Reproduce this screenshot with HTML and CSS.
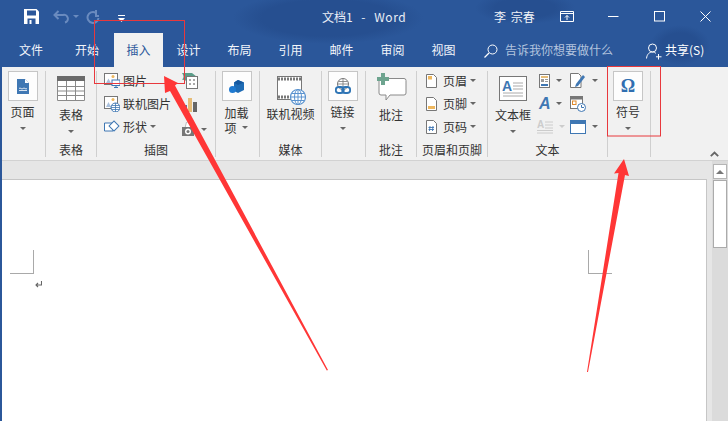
FILE: index.html
```html
<!DOCTYPE html>
<html lang="zh">
<head>
<meta charset="utf-8">
<title>文档1 - Word</title>
<link rel="stylesheet" href="styles.css">
</head>
<body>
<div class="app">
  <header class="head">
    <div class="titlebar">
      <div class="qat">
        <svg class="qat-save" width="15" height="15" viewBox="0 0 15 15"><path d="M0 0H12.500L15 2.500V15H0Z" fill="#fff"/><rect x="3" y="1.500" width="9" height="5" fill="#2b579a"/><rect x="3.500" y="9.500" width="8" height="5.500" fill="#2b579a"/><rect x="5.500" y="11" width="2" height="4" fill="#fff"/></svg>
        <svg class="qat-undo" width="16" height="14" viewBox="0 0 16 14"><path d="M5.500 1 1.500 5 5.500 9M2 5H10a3.800 3.800 0 0 1 2 7.500" fill="none" stroke="#6a8bbf" stroke-width="2"/></svg>
        <span class="qat-caret"></span>
        <svg class="qat-redo" width="14" height="14" viewBox="0 0 14 14"><path d="M10 0V6H13M9.500 2.500A5.500 5.500 0 1 0 12.500 8" fill="none" stroke="#6a8bbf" stroke-width="2"/></svg>
        <svg class="qat-more" width="7" height="7" viewBox="0 0 7 7"><rect x="0" y="0" width="7" height="1" fill="#fff"/><path d="M0 3H7L3.500 7Z" fill="#fff"/></svg>
      </div>
      <div class="doc-title">文档1 - <span class="latin">Word</span></div>
      <div class="user">李 宗春</div>
      <svg class="win-display" width="14" height="11" viewBox="0 0 14 11"><path d="M.5.500H13.500V10.500H.5ZM.5 2.500H13.500M7 9V4.500M5 6.500 7 4.500 9 6.500" fill="none" stroke="#fff"/></svg>
      <svg class="win-min" width="11" height="11" viewBox="0 0 11 11"><path d="M0 5.500H10.500" stroke="#fff" fill="none"/></svg>
      <svg class="win-max" width="11" height="11" viewBox="0 0 11 11"><rect x=".5" y=".5" width="10" height="9.500" fill="none" stroke="#fff"/></svg>
      <svg class="win-close" width="11" height="11" viewBox="0 0 11 11"><path d="M.5.500 10.500 10.500M10.500.500 .5 10.500" stroke="#fff" fill="none"/></svg>
    </div>
    <nav class="tabs">
      <span class="tab tab-file">文件</span>
      <span class="tab tab-home">开始</span>
      <span class="tab tab-active">插入</span>
      <span class="tab">设计</span>
      <span class="tab">布局</span>
      <span class="tab">引用</span>
      <span class="tab">邮件</span>
      <span class="tab">审阅</span>
      <span class="tab">视图</span>
      <svg class="search-icon" width="14" height="14" viewBox="0 0 14 14"><circle cx="8.500" cy="5.500" r="4.500" fill="none" stroke="#fff"/><path d="M5 9 .5 13.500" stroke="#fff" stroke-width="1.300"/></svg>
      <span class="tell-me">告诉我你想要做什么</span>
      <svg class="share-icon" width="16" height="17" viewBox="0 0 16 17"><circle cx="6.500" cy="5" r="4" fill="none" stroke="#fff"/><path d="M.5 15.500C1 11 3.500 9 6.500 9c1.500 0 2.500.5 3.500 1.500M12.500 11V16.500M10 13.800H15.500" fill="none" stroke="#fff"/></svg>
      <span class="share">共享(S)</span>
    </nav>
  </header>

  <section class="ribbon">
    <div class="group g-page">
      <div class="body center">
        <div class="big">
          <span class="box"><svg width="12" height="15" viewBox="0 0 12 15"><path d="M0 0H8L12 4V15H0Z" fill="#3f77b3"/><path d="M8 0 12 4H8Z" fill="#fff"/><path d="M2 9.500Q3 8.500 4 9.500T6 9.500 8 9.500 10 9.500M2 11.500H10" stroke="#fff" fill="none" stroke-width=".8"/></svg></span>
          <span class="big-label">页面</span>
          <span class="caret"></span>
        </div>
      </div>
    </div>

    <div class="group g-table">
      <div class="body center">
        <div class="big noframe">
          <svg class="big-icon" width="28" height="25" viewBox="0 0 28 25"><rect width="28" height="25" fill="#fff"/><rect width="28" height="5" fill="#6b6b6b"/><path d="M.5 5V24.500H27.500V5M9.500 5V24.500M18.500 5V24.500M.5 10.500H27.500M.5 15H27.500M.5 19.500H27.500" fill="none" stroke="#8a8a8a"/></svg>
          <span class="big-label near">表格</span>
          <span class="caret"></span>
        </div>
      </div>
      <div class="label">表格</div>
    </div>

    <div class="group g-illus">
      <div class="body illus">
        <div class="rows">
          <div class="row">
            <svg class="ic" width="16" height="15" viewBox="0 0 16 15"><rect x=".5" y=".5" width="13" height="11" fill="#fff" stroke="#777"/><circle cx="9" cy="3.500" r="1.500" fill="#eeb75e"/><path d="M2 10 4.500 5.500 7 10Z" fill="#a9c0dc"/><rect x="8" y="7" width="8" height="5.500" fill="#fff" stroke="#3f77b3"/><path d="M10 14.500H14M12 12.500V14.500" stroke="#3f77b3"/></svg>
            <span>图片</span>
          </div>
          <div class="row">
            <svg class="ic" width="16" height="16" viewBox="0 0 16 16"><rect x=".5" y=".5" width="13" height="12" fill="#fff" stroke="#777"/><circle cx="9" cy="3.500" r="1.500" fill="#eeb75e"/><path d="M2 11 4.500 6 7 11Z" fill="#a9c0dc"/><circle cx="11.500" cy="11.500" r="4.500" fill="#fff" stroke="#3f77b3"/><path d="M7 11.500H16M11.500 7V16M8 9.500H15M8 13.500H15" stroke="#3f77b3" stroke-width=".8"/></svg>
            <span>联机图片</span>
          </div>
          <div class="row">
            <svg class="ic" width="16" height="15" viewBox="0 0 16 15"><path d="M.5 4H9V12H.5Z" fill="#fff" stroke="#3f77b3"/><rect x="6.500" y="3.500" width="7" height="7" transform="rotate(45 10 7)" fill="#fff" stroke="#3f77b3"/></svg>
            <span>形状</span>
            <span class="caret inline near"></span>
          </div>
        </div>
        <div class="side">
          <svg width="16" height="16" viewBox="0 0 16 16"><path d="M0 0H10L15 4H5V8L0 6.500Q3 4 0 0Z" fill="#5b9d89"/><rect x="4.500" y="3.500" width="11" height="12" fill="#fff" stroke="#777"/><path d="M7 7H9M11 7H13M7 11H9M11 11H13" stroke="#555"/></svg>
          <svg width="16" height="16" viewBox="0 0 16 16"><rect x="1" y="8" width="4" height="7" fill="#4b76ad"/><rect x="6" y="1" width="4" height="14" fill="#e6bc77"/><rect x="11" y="5" width="4" height="10" fill="#666"/></svg>
          <div class="side-shot">
            <svg width="12" height="15" viewBox="0 0 12 15"><path d="M3 6 4.500 0H7.500L9 6Z" fill="#fff" stroke="#bbb"/><rect x="0" y="5" width="12" height="9" fill="#777"/><circle cx="6" cy="9.500" r="3" fill="#fff"/><circle cx="6" cy="9.500" r="1.500" fill="#777"/></svg>
            <span class="caret inline wide"></span>
          </div>
        </div>
      </div>
      <div class="label">插图</div>
    </div>

    <div class="group g-addin">
      <div class="body center">
        <div class="big">
          <span class="box"><svg width="16" height="15" viewBox="0 0 16 15"><path d="M9 1 15 3.500V11L9 14 5 12V3.500Z" fill="#1f6cb5"/><path d="M9 1 15 3.500 9 6 5 3.500Z" fill="#1558a0"/><circle cx="3.500" cy="10.500" r="3.500" fill="#1f7ad1"/></svg></span>
          <div class="addin-text">
            <span class="big-label tight">加载</span>
            <span class="addin-line"><span>项</span><span class="caret inline near"></span></span>
          </div>
        </div>
      </div>
    </div>

    <div class="group g-media">
      <div class="body center">
        <div class="big noframe media">
          <svg class="big-icon wide-icon" width="29" height="29" viewBox="0 0 29 29"><rect x=".5" y=".5" width="24" height="23" fill="#fff" stroke="#777"/><path d="M1 3H24M1 21H24" stroke="#777" stroke-width="3" stroke-dasharray="2 1"/><circle cx="21" cy="21" r="7.500" fill="#fff" stroke="#5b93cf" stroke-width="1.200"/><path d="M13.500 21H28.500M21 13.500V28.500M15 17.500H27M15 24.500H27" stroke="#5b93cf"/><ellipse cx="21" cy="21" rx="3.500" ry="7.500" fill="none" stroke="#5b93cf"/></svg>
          <span class="big-label media-label">联机视频</span>
        </div>
      </div>
      <div class="label">媒体</div>
    </div>

    <div class="group g-link">
      <div class="body center">
        <div class="big">
          <span class="box"><svg width="16" height="17" viewBox="0 0 16 17"><circle cx="8" cy="6" r="5.500" fill="#fff" stroke="#777"/><path d="M2.500 6H13.500M8 .5V9M3.500 3.500H12.500" stroke="#777" stroke-width=".8"/><rect x=".8" y="9" width="8" height="6" rx="3" fill="none" stroke="#2f75b5" stroke-width="1.800"/><rect x="7.200" y="9" width="8" height="6" rx="3" fill="none" stroke="#2f75b5" stroke-width="1.800"/></svg></span>
          <span class="big-label">链接</span>
          <span class="caret"></span>
        </div>
      </div>
    </div>

    <div class="group g-comment">
      <div class="body center">
        <div class="big noframe comment">
          <svg class="big-icon" width="31" height="29" viewBox="0 0 31 29"><path d="M4 5.500H28a2 2 0 0 1 2 2V20a2 2 0 0 1-2 2H14L10 27V22H5a2 2 0 0 1-2-2V6" fill="#fff" stroke="#8a8a8a"/><path d="M5 0H9V4H13V8H9V12H5V8H1V4H5Z" fill="#6ea48f"/></svg>
          <span class="big-label comment-label">批注</span>
        </div>
      </div>
      <div class="label">批注</div>
    </div>

    <div class="group g-hf">
      <div class="body hf">
        <div class="row">
          <svg class="ic-doc" width="11" height="14" viewBox="0 0 11 14"><path d="M.5.500H7.500L10.500 3.500V13.500H.5Z" fill="#fff" stroke="#777"/><rect x="2" y="2" width="4" height="3.500" fill="#eeb75e"/></svg>
          <span>页眉</span><span class="caret inline near"></span>
        </div>
        <div class="row">
          <svg class="ic-doc" width="11" height="14" viewBox="0 0 11 14"><path d="M.5.500H7.500L10.500 3.500V13.500H.5Z" fill="#fff" stroke="#777"/><rect x="2" y="9" width="7" height="3" fill="#eeb75e"/></svg>
          <span>页脚</span><span class="caret inline near"></span>
        </div>
        <div class="row">
          <svg class="ic-doc" width="11" height="14" viewBox="0 0 11 14"><path d="M.5.500H7.500L10.500 3.500V13.500H.5Z" fill="#fff" stroke="#777"/><path d="M4 6 3.500 11M7 6 6.500 11M2.500 7.500H8M2.500 9.500H8" stroke="#3f77b3" stroke-width=".9"/></svg>
          <span>页码</span><span class="caret inline near"></span>
        </div>
      </div>
      <div class="label">页眉和页脚</div>
    </div>

    <div class="group g-text">
      <div class="body textg">
        <div class="big noframe textbox">
          <svg class="big-icon" width="28" height="25" viewBox="0 0 28 25"><rect x=".5" y=".5" width="27" height="24" fill="#fff" stroke="#777"/><path d="M14 7H24M14 10H24M14 13H24M4 17H24M4 20H24" stroke="#aaa"/><text x="3" y="15" class="svg-a">A</text></svg>
          <span class="big-label near">文本框</span>
          <span class="caret"></span>
        </div>
        <div class="tcol">
          <div class="row">
            <svg width="11" height="14" viewBox="0 0 11 14"><rect x=".5" y=".5" width="10" height="13" fill="#fff" stroke="#777"/><rect x="2" y="2" width="7" height="2" fill="#e6bc77"/><rect x="2" y="5" width="3" height="3" fill="#999"/><path d="M6 5.500H9M6 7.500H9" stroke="#999"/><rect x="2" y="10" width="7" height="2" fill="#3f77b3"/></svg>
            <span class="caret inline"></span>
          </div>
          <div class="row">
            <span class="wordart">A</span>
            <span class="caret inline"></span>
          </div>
          <div class="row faded">
            <svg width="16" height="15" viewBox="0 0 16 15"><path d="M8 3H16M8 6H16M8 9H16M0 11.500H16M0 14H16" stroke="#ccc"/><text x="0" y="9" class="svg-a2">A</text></svg>
            <span class="caret inline pale"></span>
          </div>
        </div>
        <div class="tcol second">
          <div class="row">
            <svg width="16" height="15" viewBox="0 0 16 15"><path d="M.5.500H8.500L11 3V14.500H.5Z" fill="#fff" stroke="#777"/><path d="M6 11 5 14 8 13 15 4 13 2Z" fill="#3f77b3"/></svg>
            <span class="caret inline"></span>
          </div>
          <div class="row">
            <svg width="16" height="16" viewBox="0 0 16 16"><rect x=".5" y=".5" width="12" height="12" fill="#fff" stroke="#777"/><rect x="1" y="1" width="11" height="2.500" fill="#777"/><rect x="2.500" y="5" width="3.500" height="3.500" fill="#fff" stroke="#e08a2c"/><circle cx="11.500" cy="11.500" r="4" fill="#fff" stroke="#3f77b3"/><path d="M11.500 9V11.500H14" fill="none" stroke="#3f77b3"/></svg>
          </div>
          <div class="row">
            <svg width="16" height="14" viewBox="0 0 16 14"><rect x=".5" y=".5" width="15" height="13" fill="#fff" stroke="#3f77b3"/><rect x="1" y="1" width="14" height="3" fill="#3f77b3"/></svg>
            <span class="caret inline"></span>
          </div>
        </div>
      </div>
      <div class="label">文本</div>
    </div>

    <div class="group g-symbol">
      <div class="body center">
        <div class="big">
          <span class="box omega">Ω</span>
          <span class="big-label">符号</span>
          <span class="caret"></span>
        </div>
      </div>
    </div>

    <div class="ribbon-end">
      <svg width="9" height="6" viewBox="0 0 9 6"><path d="M.8 5.200 4.500 1.500 8.200 5.200" fill="none" stroke="#666" stroke-width="1.800"/></svg>
    </div>
  </section>

  <main class="doc">
    <div class="canvas">
      <div class="page">
        <div class="left-mark">
          <div class="corner corner-l"></div>
          <svg class="para" width="7" height="7" viewBox="0 0 7 7"><path d="M6.500 0V4H1M3 2 1 4 3 6" fill="none" stroke="#666" stroke-width="1.100"/></svg>
        </div>
        <div class="corner corner-r"></div>
      </div>
    </div>
    <aside class="scrollbar">
      <div class="sb-btn"><span class="sb-up"></span></div>
      <div class="sb-thumb"></div>
    </aside>
  </main>

  <svg class="marks" width="728" height="421" viewBox="0 0 728 421">
    <rect x="94.500" y="20.500" width="90" height="63" fill="none" stroke="#e8383d"/>
    <rect x="607.500" y="66.500" width="53" height="69.500" fill="none" stroke="#e8383d"/>
    <path d="M164 76 178 83 175 85.500 328 370 326.800 370.500 170 91 165 93Z" fill="#ff3636"/>
    <path d="M624 159 629 176 625 175 588 372 587 372 618.500 173 614 173.500Z" fill="#ff3636"/>
  </svg>
</div>
</body>
</html>
```
FILE: styles.css
```css
* { box-sizing: border-box; }
html, body { margin: 0; padding: 0; }
body {
  width: 728px;
  height: 421px;
  overflow: hidden;
  font-family: "Noto Sans CJK SC", "Liberation Sans", sans-serif;
  font-size: 12px;
  color: #333;
}
.app {
  position: relative;
  width: 728px;
  height: 421px;
  overflow: hidden;
  padding-left: 2px;
  background: #2b579a;
  display: flex;
  flex-direction: column;
}
.head {
  margin-left: -2px;
  height: 67px;
  color: #fff;
  background:
    radial-gradient(ellipse 95px 26px at 328px 18px, #264f90 70%, transparent 100%),
    radial-gradient(ellipse 50px 16px at 525px 8px, #264f90 60%, transparent 100%),
    radial-gradient(ellipse 30px 20px at 680px 45px, #264f90 60%, transparent 100%),
    #2b579a;
}
.titlebar { height: 33px; display: flex; align-items: center; }
.qat { display: flex; align-items: center; width: 322px; padding-left: 24px; }
.qat-undo { margin-left: 14px; }
.qat-caret { margin-left: 4px; border: 3px solid transparent; border-top: 3px solid #6a8bbf; border-bottom: 0; }
.qat-redo { margin-left: 7px; }
.qat-more { margin-left: 18px; margin-top: 3px; }
.doc-title { width: 172px; color: #e9eef6; white-space: nowrap; word-spacing: 6px; }
.latin { letter-spacing: .6px; }
.user { width: 66px; color: #f0f3f8; white-space: nowrap; word-spacing: 2px; }
.win-display { margin-right: 34px; }
.win-min { margin-right: 35px; }
.win-max { margin-right: 35px; }

.tabs { height: 34px; display: flex; align-items: stretch; }
.tab {
  width: 51px;
  text-align: center;
  line-height: 34px;
  color: #f2f5fa;
}
.tab-file { margin-left: 5.5px; }
.tab-home { margin-left: 5px; }
.tab-active {
  width: 49px;
  margin-left: 1.5px;
  background: #f1f1f1;
  color: #2b579a;
}
.search-icon { align-self: center; margin-left: 15px; margin-top: 2px; }
.tell-me { margin-left: 7px; width: 141px; line-height: 34px; color: #b3c4de; white-space: nowrap; }
.share-icon { align-self: center; margin-top: 2px; }
.share { margin-left: 3px; line-height: 33px; color: #fff; white-space: nowrap; }

.ribbon {
  height: 94px;
  background: #f1f1f1;
  border-bottom: 1px solid #d2d2d2;
  padding-top: 4px;
  display: flex;
  align-items: flex-start;
  color: #333;
}
.group {
  height: 86px;
  border-right: 1px solid #cfcfcf;
  display: flex;
  flex-direction: column;
}
.g-page { width: 44px; }
.g-table { width: 51px; }
.g-illus { width: 119px; }
.g-addin { width: 44px; }
.g-media { width: 62px; }
.g-link { width: 44px; }
.g-comment { width: 51px; }
.g-hf { width: 71px; }
.g-text { width: 120px; }
.g-symbol { width: 43px; }
.body { flex: 1; min-height: 0; }
.center { display: flex; justify-content: center; }
.label { height: 14px; line-height: 14px; text-align: center; white-space: nowrap; color: #333; }

.big { display: flex; flex-direction: column; align-items: center; white-space: nowrap; margin-left: -2px; }
.big.noframe { margin-left: 0; padding-top: 5px; }
.box {
  width: 30px;
  height: 30px;
  background: #fdfdfd;
  border: 1px solid #c6c6c6;
  display: flex;
  align-items: center;
  justify-content: center;
  flex: none;
}
.big-icon { flex: none; }
.wide-icon { margin-left: 2px; }
.big-label { line-height: 17px; margin-top: 2px; text-align: center; }
.big-label.near { margin-top: 5px; }
.big.media { padding-top: 5px; }
.media-label { margin-top: 0; }
.big.comment { padding-top: 2px; }
.comment-label { margin-top: 4px; }
.caret {
  display: block;
  margin-top: 7px;
  width: 0;
  height: 0;
  border: 3px solid transparent;
  border-top: 3px solid #666;
  border-bottom: 0;
}
.caret.inline { display: inline-block; margin: 0 0 0 6px; flex: none; }
.caret.inline.near { margin-left: 3px; }
.caret.wide { margin-left: 7px; }
.caret.pale { border-top-color: #ccc; }

.addin-text { display: flex; flex-direction: column; align-items: flex-start; }
.tight { line-height: 15px; margin-top: 4px; }
.addin-line { display: flex; align-items: center; line-height: 15px; }
.addin-line .caret.inline.near { margin-left: 5px; }

.row { height: 23px; display: flex; align-items: center; white-space: nowrap; }
.ic { margin-right: 3px; flex: none; }
.ic-doc { margin-right: 6px; flex: none; }

.illus { display: flex; padding-left: 7px; }
.rows { width: 78px; margin-top: -2px; }
.side { display: flex; flex-direction: column; margin-top: 2px; gap: 8px; }
.side-shot { display: flex; align-items: center; height: 16px; }

.hf { padding-left: 9px; margin-top: -2px; }

.textg { display: flex; }
.textbox { width: 50px; }
.tcol { margin-left: 1px; margin-top: -2px; width: 31px; }
.tcol.second { margin-left: 0; }
.svg-a { font: bold 14px "Liberation Sans", sans-serif; fill: #3f77b3; }
.svg-a2 { font: bold 10px "Liberation Sans", sans-serif; fill: #ccc; }
.wordart { width: 11px; font: italic bold 16px "Liberation Sans", sans-serif; color: #3f77b3; text-align: center; }
.tcol .row svg { flex: none; }
.faded svg { margin-left: -2px; }

.omega {
  font: bold 18px "Liberation Serif", serif;
  color: #2f6eb0;
}
.ribbon-end { flex: 1; align-self: flex-end; text-align: right; padding-right: 9px; line-height: 0; padding-bottom: 3px; }

.doc { flex: 1; min-height: 0; display: flex; background: #e6e6e6; }
.canvas { width: 710px; padding-top: 18px; padding-right: 5px; }
.page {
  height: 260px;
  background: #fff;
  border: 1px solid #c6c6c6;
  border-left: 0;
  padding: 70px 94px 0 8px;
  display: flex;
  justify-content: space-between;
  align-items: flex-start;
}
.left-mark { display: flex; flex-direction: column; align-items: flex-end; }
.corner { width: 24px; height: 24px; border-bottom: 1px solid #a9a9a9; }
.corner-l { border-right: 1px solid #a9a9a9; }
.corner-r { border-left: 1px solid #a9a9a9; }
.para { margin-top: 7px; margin-right: -8px; }
.scrollbar { width: 16px; background: #dbdbdb; padding: 3px 1px 0; }
.sb-btn {
  height: 15px;
  background: #fff;
  border: 1px solid #b5b5b5;
  display: flex;
  align-items: center;
  justify-content: center;
}
.sb-up { border: 4px solid transparent; border-bottom: 4px solid #777; border-top: 0; }
.sb-thumb { height: 68px; margin-top: 1px; background: #fff; border: 1px solid #ababab; }

.marks { position: absolute; top: 0; left: 0; pointer-events: none; }
```
